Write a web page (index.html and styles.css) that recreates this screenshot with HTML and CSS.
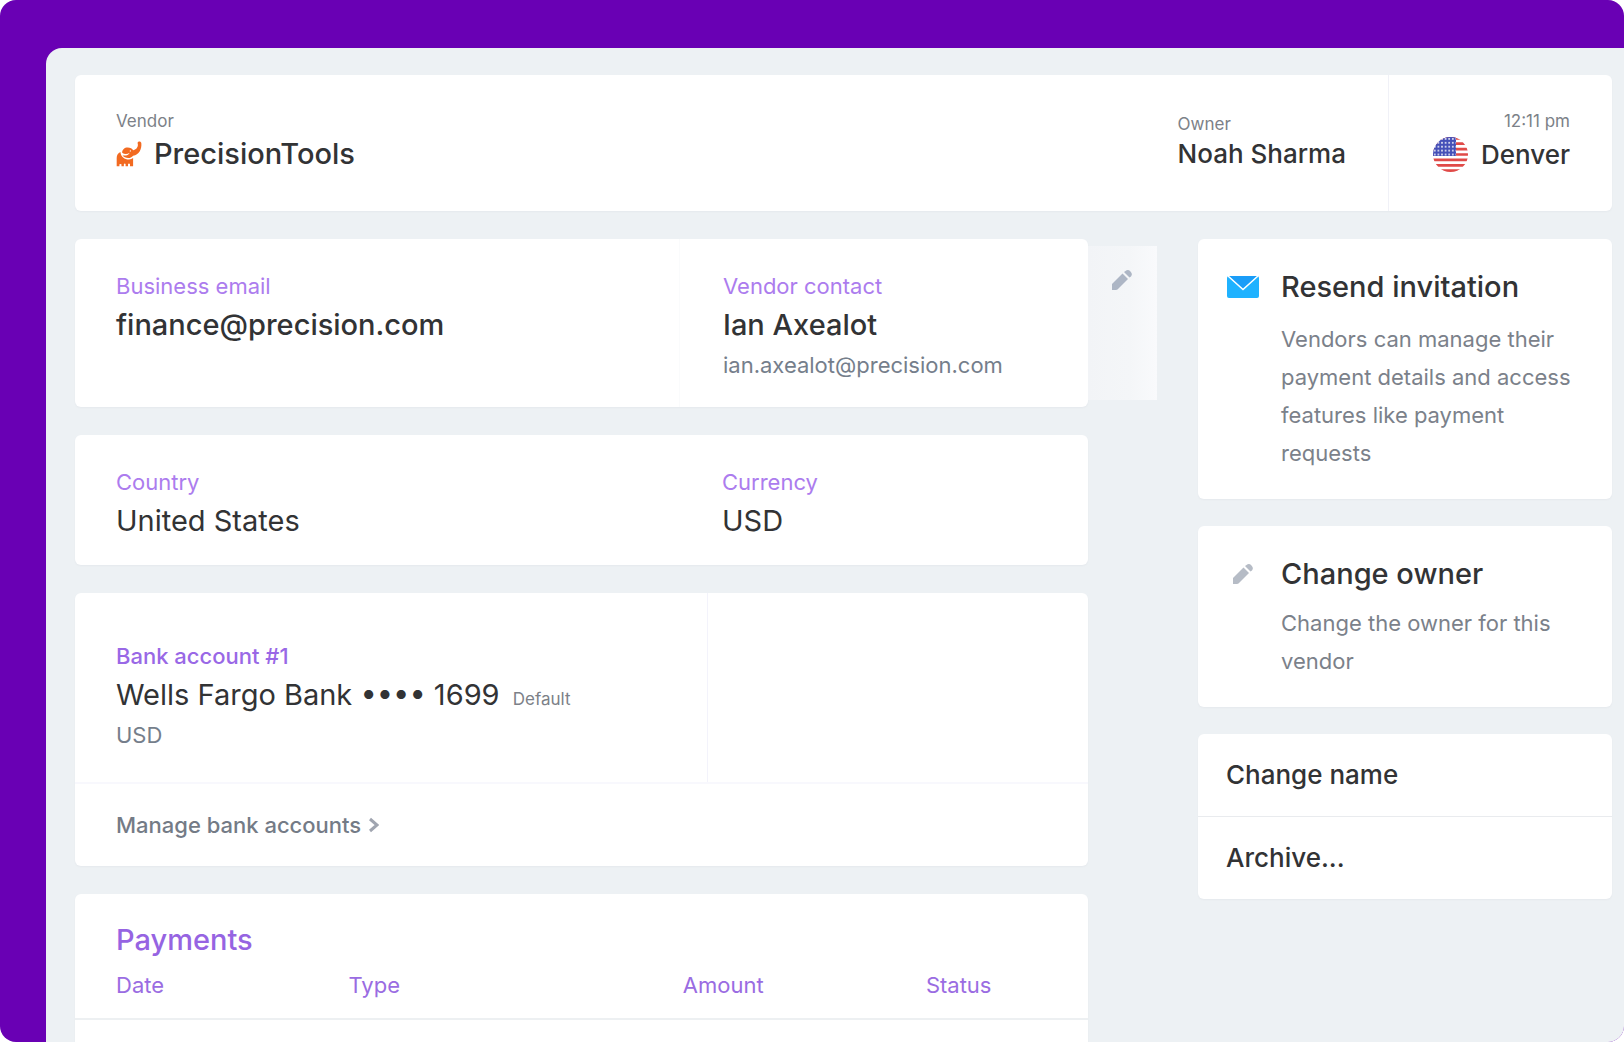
FILE: index.html
```html
<!DOCTYPE html>
<html lang="en">
<head>
    <meta charset="UTF-8">
    <meta name="viewport" content="width=device-width, initial-scale=1.0">
    <title>PrecisionTools - Vendor</title>
    <link rel="stylesheet" href="styles.css">
</head>
<body>
    <div class="frame">
        <div class="panel">
            <header class="card header">
                <div class="header-vendor">
                    <div class="small">Vendor</div>
                    <h1 class="vendor-name">
                        <svg class="logo" viewBox="0 0 76 76" aria-hidden="true">
                            <path fill="#f26a21" d="M2 74V50C2 41 6 35 13 32C14 46 25 54 38 54Q45 54 50 50V74H41V67Q38 64 35 67V74H28V67Q26 64 23 67V74H16V68Q13 66 10 68V74Z"/>
                            <path fill="#f26a21" d="M18 34C18 25 25 19 34 19C42 19 47 22 50 27C58 26 64 19 64 11L63 5C65 0 73 0 74 6C76 24 67 41 50 43C46 48 41 50 36 50C29 50 22 47 19 42C28 44 37 41 40 34C33 39 24 39 18 34Z"/>
                            <circle fill="#fff" cx="42" cy="29" r="2"/>
                        </svg>
                        PrecisionTools
                    </h1>
                </div>
                <div class="header-owner">
                    <div class="small">Owner</div>
                    <div class="medium">Noah Sharma</div>
                </div>
                <div class="header-place">
                    <div class="small">12:11 pm</div>
                    <div class="medium place">
                        <svg class="flag" viewBox="0 0 35 35" aria-hidden="true">
                            <defs>
                                <clipPath id="round"><circle cx="17.5" cy="17.5" r="17.5"/></clipPath>
                                <pattern id="stars" width="3.6" height="3.9" patternUnits="userSpaceOnUse">
                                    <rect width="3.6" height="3.9" fill="#4550b8"/>
                                    <circle cx="1.8" cy="1.9" r="0.9" fill="#fff"/>
                                </pattern>
                            </defs>
                            <g clip-path="url(#round)">
                                <rect width="35" height="35" fill="#fff"/>
                                <path stroke="#e04a48" stroke-width="2.7" d="M0 1.3H35M0 6.7H35M0 12.1H35M0 17.5H35M0 22.9H35M0 28.3H35M0 33.7H35"/>
                                <rect width="23" height="19" fill="url(#stars)"/>
                            </g>
                        </svg>
                        Denver
                    </div>
                </div>
            </header>

            <div class="columns">
                <main class="main">
                    <section class="card split">
                        <div class="field">
                            <div class="label">Business email</div>
                            <div class="value strong">finance@precision.com</div>
                        </div>
                        <div class="field divided">
                            <div class="label">Vendor contact</div>
                            <div class="value strong">Ian Axealot</div>
                            <div class="sub">ian.axealot@precision.com</div>
                        </div>
                    </section>
                    <button class="edit" type="button" aria-label="Edit contact">
                        <svg class="pencil" viewBox="0 0 20 20" aria-hidden="true">
                            <path d="M0 20V14L10.500 3.500L16 9L5.500 19.500L4 20Z"/>
                            <path d="M12 2L13.500 1Q16 -1 18.500 1.500Q21 4 19 6.500L17.500 7.500Z"/>
                        </svg>
                    </button>

                    <section class="card split short">
                        <div class="field">
                            <div class="label">Country</div>
                            <div class="value">United States</div>
                        </div>
                        <div class="field">
                            <div class="label">Currency</div>
                            <div class="value">USD</div>
                        </div>
                    </section>

                    <section class="card">
                        <div class="bank">
                            <div class="bank-account">
                                <div class="label bank-label">Bank account #1</div>
                                <div class="value">Wells Fargo Bank •••• 1699 <span class="small default">Default</span></div>
                                <div class="sub">USD</div>
                            </div>
                        </div>
                        <a class="manage" href="#">Manage bank accounts
                            <svg class="chevron" viewBox="0 0 10 16" aria-hidden="true"><path d="M1 2L8 8L1 14"/></svg>
                        </a>
                    </section>

                    <section class="card payments">
                        <h2>Payments</h2>
                        <table>
                            <thead>
                                <tr>
                                    <th class="col-date">Date</th>
                                    <th class="col-type">Type</th>
                                    <th class="col-amount">Amount</th>
                                    <th class="col-status">Status</th>
                                </tr>
                            </thead>
                        </table>
                    </section>
                </main>

                <aside class="side">
                    <button class="card action" type="button">
                        <svg class="envelope" viewBox="0 0 32 22" aria-hidden="true">
                            <rect width="32" height="22" rx="2" fill="#1fb2ff"/>
                            <path fill="#1a9df8" d="M2 0H30L16 13Z"/>
                            <path fill="none" stroke="#fff" stroke-width="1.500" d="M1 0L16 13.500L31 0"/>
                        </svg>
                        <span class="action-title">Resend invitation</span>
                        <span class="action-text">Vendors can manage their payment details and access features like payment requests</span>
                    </button>
                    <button class="card action tight" type="button">
                        <svg class="pencil" viewBox="0 0 20 20" aria-hidden="true">
                            <path d="M0 20V14L10.500 3.500L16 9L5.500 19.500L4 20Z"/>
                            <path d="M12 2L13.500 1Q16 -1 18.500 1.500Q21 4 19 6.500L17.500 7.500Z"/>
                        </svg>
                        <span class="action-title">Change owner</span>
                        <span class="action-text">Change the owner for this vendor</span>
                    </button>
                    <div class="card menu">
                        <button class="medium" type="button">Change name</button>
                        <button class="medium" type="button">Archive...</button>
                    </div>
                </aside>
            </div>
        </div>
    </div>
</body>
</html>
```
FILE: styles.css
```css
* {
    box-sizing: border-box;
}
body {
    margin: 0;
    background-color: #fff;
    color: #323335;
    font-family: Inter, "Liberation Sans", sans-serif;
}
h1, h2 {
    margin: 0;
    font-weight: 500;
}
button {
    border: none;
    padding: 0;
    color: inherit;
    font-family: inherit;
    text-align: left;
    cursor: pointer;
}
.frame {
    height: 100vh;
    padding: 48px 0 0 46px;
    background-color: #6900b4;
    border-radius: 16px;
    overflow: hidden;
}
.panel {
    display: flex;
    flex-direction: column;
    gap: 28px;
    height: 100%;
    padding: 27px 12px 0 29px;
    background-color: #edf1f4;
    border-radius: 16px 0 0 0;
}
.card {
    background-color: #fff;
    border-radius: 6px;
    box-shadow: 0 1px 2px rgba(40, 50, 70, 0.04);
}

/* text */
.small {
    color: #7c8188;
    font-size: 17px;
    line-height: 24px;
}
.medium {
    font-size: 26px;
    font-weight: 500;
    line-height: 32px;
}
.label {
    color: #ac7cee;
    font-size: 22px;
    line-height: 28px;
}
.value {
    margin-top: 7px;
    font-size: 29px;
    line-height: 36px;
}
.strong {
    font-weight: 500;
}
.sub {
    margin-top: 8px;
    color: #757e8b;
    font-size: 22px;
    line-height: 28px;
}

/* header */
.header {
    display: flex;
    flex-shrink: 0;
    height: 136px;
}
.header-vendor {
    flex: 1;
    padding: 34px 0 0 41px;
}
.vendor-name {
    display: flex;
    align-items: center;
    gap: 12px;
    margin-top: 3px;
    font-size: 29px;
    line-height: 36px;
}
.logo {
    width: 26px;
    height: 26px;
}
.header-owner {
    padding: 37px 42px 0 0;
}
.header-owner .medium {
    margin-top: 2px;
}
.header-place {
    padding: 34px 42px 0 44px;
    border-left: 1px solid #f0f1f7;
    text-align: right;
}
.place {
    display: flex;
    align-items: center;
    gap: 13px;
    margin-top: 4px;
}
.flag {
    width: 35px;
    height: 35px;
}

/* main column */
.columns {
    display: grid;
    grid-template-columns: 1fr 414px;
    column-gap: 41px;
    flex: 1;
    min-height: 0;
}
.main {
    display: grid;
    grid-template-columns: 1fr 69px;
    grid-template-rows: auto auto auto 1fr;
    row-gap: 28px;
}
.main .card {
    grid-column: 1;
}
.split {
    display: grid;
    grid-template-columns: 604fr 409fr;
}
.field {
    padding: 33px 0 28px 41px;
}
.field + .field {
    padding-left: 43px;
}
.divided {
    border-left: 1px solid #fafbfc;
}
.short .field {
    padding-bottom: 26px;
}
.edit {
    display: flex;
    align-items: flex-start;
    margin: 7px 0;
    padding: 24px 0 0 24px;
    background: linear-gradient(90deg, #f2f4f7, #f4f6f8 60%, #f9fafc);
}
.pencil {
    width: 20px;
    height: 20px;
    fill: #adb6c5;
}
.bank {
    display: grid;
    grid-template-columns: 633fr 380fr;
    border-bottom: 2px solid #f8f8fd;
}
.bank-account {
    padding: 49px 0 33px 41px;
    border-right: 1px solid #f3f3fb;
}
.bank-label {
    color: #9968e6;
    font-weight: 500;
}
.default {
    margin-left: 5px;
}
.manage {
    display: flex;
    align-items: center;
    gap: 8px;
    padding: 27px 41px;
    color: #747b86;
    font-size: 22px;
    font-weight: 500;
    line-height: 28px;
    text-decoration: none;
}
.chevron {
    width: 10px;
    height: 16px;
    fill: none;
    stroke: #a0a5b0;
    stroke-width: 3;
}
.payments {
    border-radius: 6px 6px 0 0;
}
.payments h2 {
    padding: 28px 41px 13px;
    color: #9664e2;
    font-size: 29px;
    line-height: 36px;
}
.payments table {
    width: 100%;
    border-collapse: collapse;
    table-layout: fixed;
}
.payments th {
    padding: 0 0 19px;
    border-bottom: 2px solid #edf0f2;
    color: #9a6ce2;
    font-size: 22px;
    font-weight: 400;
    line-height: 28px;
    text-align: left;
}
.payments .col-date {
    width: 27%;
    padding-left: 41px;
}
.col-type {
    width: 33%;
}
.col-amount {
    width: 24%;
}

/* side column */
.side {
    display: flex;
    flex-direction: column;
    gap: 27px;
}
.action {
    display: grid;
    grid-template-columns: 32px 1fr;
    column-gap: 22px;
    row-gap: 15px;
    align-items: center;
    padding: 30px 28px 27px 29px;
}
.tight {
    row-gap: 12px;
}
.action svg {
    justify-self: center;
}
.envelope {
    width: 32px;
    height: 22px;
}
.side .pencil {
    fill: #b6bcc6;
}
.action-title {
    font-size: 29px;
    font-weight: 500;
    line-height: 36px;
}
.action-text {
    grid-column: 2;
    color: #7b818a;
    font-size: 22px;
    line-height: 38px;
}
.menu button {
    display: block;
    width: 100%;
    padding: 25px 28px;
    background: none;
}
.menu button + button {
    border-top: 1px solid #e9ebee;
}
```
